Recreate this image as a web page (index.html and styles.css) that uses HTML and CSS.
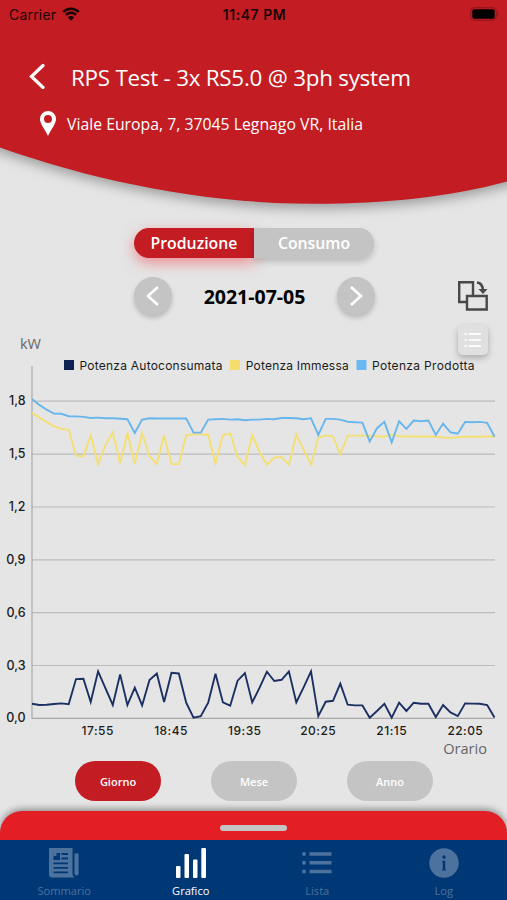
FILE: index.html
```
<!DOCTYPE html>
<html lang="it">
<head>
    <meta charset="UTF-8">
    <meta name="viewport" content="width=device-width, initial-scale=1.0">
    <title>RPS Test - Grafico</title>
    <link rel="stylesheet" href="styles.css">
</head>
<body>
    <header class="header">
        <svg class="header-bg" viewBox="0 0 507 230" width="507" height="230">
            <path d="M-20 -20H527V175.500L507 181.500C450 197 385 203.800 315 203.800C210 203.800 100 183 0 147.500L-20 140Z" fill="#c31c23"/>
        </svg>
        <div class="status-bar">
            <div class="carrier">
                <span>Carrier</span>
                <svg viewBox="0 0 18 14" width="18" height="14">
                    <path d="M1.200 4.800a11.200 11.200 0 0 1 15.600 0M3.900 7.800a7.300 7.300 0 0 1 10.200 0" fill="none" stroke="#1a0305" stroke-width="2.500"/>
                    <path d="M9 13.800L5.800 10.400a4.600 4.600 0 0 1 6.400 0Z" fill="#1a0305"/>
                </svg>
            </div>
            <div class="time">11:47 PM</div>
            <svg class="battery" viewBox="0 0 30 14" width="30" height="14">
                <rect x=".7" y=".7" width="25.600" height="12.600" rx="3.500" fill="none" stroke="#8c1419"/>
                <rect x="2.300" y="2.300" width="22.400" height="9.400" rx="2" fill="#000"/>
                <path d="M27.600 4.800q2 2.200 0 4.400z" fill="#8c1419"/>
            </svg>
        </div>
        <div class="title-row">
            <svg viewBox="0 0 16 26" width="16" height="26">
                <path d="M14 2.500L2.500 13.500L14 24.500" fill="none" stroke="#fff" stroke-width="3.200" stroke-linecap="round"/>
            </svg>
            <h1>RPS Test - 3x RS5.0 @ 3ph system</h1>
        </div>
        <div class="address-row">
            <svg viewBox="0 0 16 25" width="16" height="25">
                <path d="M8 0a8 8 0 0 0-8 8c0 5 5 10.500 8 17c3-6.500 8-12 8-17a8 8 0 0 0-8-8zm0 4a4 4 0 1 1 0 8a4 4 0 0 1 0-8z" fill="#fff" fill-rule="evenodd"/>
            </svg>
            <span>Viale Europa, 7, 37045 Legnago VR, Italia</span>
        </div>
    </header>

    <main class="content">
        <div class="switch">
            <div class="switch-item active">Produzione</div>
            <div class="switch-item">Consumo</div>
        </div>

        <div class="date-row">
            <button class="round">
                <svg viewBox="0 0 14 20" width="14" height="20"><path d="M12 1L2 10L12 19" fill="none" stroke="#fff" stroke-width="2.600"/></svg>
            </button>
            <div class="date">2021-07-05</div>
            <button class="round">
                <svg viewBox="0 0 14 20" width="14" height="20"><path d="M2 1L12 10L2 19" fill="none" stroke="#fff" stroke-width="2.600"/></svg>
            </button>
            <svg class="rotate" viewBox="0 0 30 30" width="30" height="30">
                <path d="M8.500 21H1.200V1.200H15V14M9 15H28.700V28.500H9Z" fill="none" stroke="#484848" stroke-width="2.400"/>
                <path d="M19 1.500q5.500 .5 6 8" fill="none" stroke="#484848" stroke-width="2.600"/>
                <path d="M20.500 8H29.500L25 13Z" fill="#484848"/>
            </svg>
        </div>

        <div class="tools">
            <span class="unit">kW</span>
            <button class="list-btn">
                <svg viewBox="0 0 18 16" width="18" height="16">
                    <path d="M4.500 1.800H17M4.500 8H17M4.500 14.200H17M.500 1.800H2.500M.500 8H2.500M.500 14.200H2.500" stroke="#fff" stroke-width="1.700"/>
                </svg>
            </button>
        </div>

        <svg class="chart" viewBox="0 356 507 384" width="507" height="384">
            <!-- legend -->
            <rect x="64" y="360" width="10" height="10" fill="#0e2153"/>
            <rect x="230" y="360" width="10" height="10" fill="#f5dd6b"/>
            <rect x="356.500" y="360" width="10" height="10" fill="#6ab8f2"/>
            <g class="legend-text">
                <text x="79.500" y="369.700" textLength="143">Potenza Autoconsumata</text>
                <text x="245.700" y="369.700" textLength="103">Potenza Immessa</text>
                <text x="372" y="369.700" textLength="102.500">Potenza Prodotta</text>
            </g>

            <!-- grid -->
            <path class="grid" d="M32 401.200H495M32 454.100H495M32 507H495M32 559.800H495M32 612.700H495M32 665.500H495"/>
            <path class="axis" d="M32 366V718.400H495"/>

            <g class="y-text">
                <text x="25.500" y="405">1,8</text>
                <text x="25.500" y="458">1,5</text>
                <text x="25.500" y="511">1,2</text>
                <text x="25.500" y="563.500">0,9</text>
                <text x="25.500" y="616.500">0,6</text>
                <text x="25.500" y="669.500">0,3</text>
                <text x="25.500" y="722">0,0</text>
            </g>
            <g class="x-text">
                <text x="97.700" y="735.300">17:55</text>
                <text x="171" y="735.300">18:45</text>
                <text x="244.800" y="735.300">19:35</text>
                <text x="318.200" y="735.300">20:25</text>
                <text x="391.700" y="735.300">21:15</text>
                <text x="465.300" y="735.300">22:05</text>
            </g>

            <g class="lines">
                <polyline id="immessa" stroke="#f4df72"/>
                <polyline id="prodotta" stroke="#69b6ec"/>
                <polyline id="autoconsumata" stroke="#1b3061"/>
            </g>
        </svg>
        <div class="x-title">Orario</div>

        <div class="periods">
            <button class="period active">Giorno</button>
            <button class="period">Mese</button>
            <button class="period">Anno</button>
        </div>
    </main>

    <div class="sheet"><div class="handle"></div></div>

    <nav class="tabs">
        <div class="tab">
            <svg viewBox="0 0 30 30" width="30" height="30">
                <path fill="currentColor" fill-rule="evenodd" d="M0 0H23.500V26q0 2.500 2 3.500H3Q0 29.500 0 26.500ZM4.500 5V12H11V5ZM12.500 5V7H19V5ZM12.500 9.500V11.500H19V9.500ZM4.500 14.500V16.300H19V14.500ZM4.500 19V20.800H19V19ZM4.500 23.500V25.300H19V23.500ZM25.500 5.500H29.500V25.500q0 2-2 2t-2-2Z"/>
                <path fill="currentColor" d="M4.500 5H7.500V8H4.500Z"/>
            </svg>
            <span>Sommario</span>
        </div>
        <div class="tab active">
            <svg viewBox="0 0 30 30" width="30" height="30">
                <g fill="currentColor">
                    <rect x="0" y="18" width="4.500" height="12" rx="1"/>
                    <rect x="8.500" y="6" width="4.500" height="24" rx="1"/>
                    <rect x="17" y="11.500" width="4.500" height="18.500" rx="1"/>
                    <rect x="25.300" y="0" width="4.700" height="30" rx="1"/>
                </g>
            </svg>
            <span>Grafico</span>
        </div>
        <div class="tab">
            <svg viewBox="0 0 30 30" width="30" height="30">
                <path d="M7.500 6H29.500M7.500 14.800H29.500M7.500 23.500H29.500" stroke="currentColor" stroke-width="3.600"/>
                <g fill="currentColor">
                    <circle cx="2" cy="6" r="2"/>
                    <circle cx="2" cy="14.800" r="2"/>
                    <circle cx="2" cy="23.500" r="2"/>
                </g>
            </svg>
            <span>Lista</span>
        </div>
        <div class="tab">
            <svg viewBox="0 0 30 30" width="30" height="30">
                <circle cx="15" cy="15" r="14.700" fill="currentColor"/>
                <circle cx="15" cy="9" r="1.700" fill="#003876"/>
                <path d="M13 12.700H16.200V21.500H17.200V22.500H13V21.500H13.800V13.700H13Z" fill="#003876"/>
            </svg>
            <span>Log</span>
        </div>
    </nav>

    <script>
        const series = {
            autoconsumata: [83, 76, 78, 82, 85, 80, 223, 225, 93, 267, 172, 76, 250, 76, 174, 74, 218, 255, 93, 259, 255, 89, 4, 13, 89, 253, 91, 72, 214, 257, 91, 174, 265, 212, 219, 267, 91, 176, 267, 13, 95, 100, 197, 78, 74, 74, 4, 42, 83, 4, 89, 42, 89, 83, 83, 8, 76, 34, 13, 85, 84, 83, 76, 5],
            immessa: [1734, 1707, 1681, 1658, 1643, 1638, 1492, 1486, 1607, 1443, 1550, 1624, 1447, 1620, 1443, 1620, 1488, 1443, 1607, 1443, 1443, 1607, 1612, 1612, 1610, 1447, 1607, 1618, 1484, 1437, 1607, 1512, 1439, 1480, 1484, 1439, 1611, 1526, 1439, 1594, 1605, 1601, 1499, 1605, 1605, 1605, 1603, 1601, 1598, 1612, 1601, 1600, 1600, 1600, 1600, 1598, 1594, 1592, 1596, 1598, 1598, 1598, 1601, 1597],
            prodotta: [1813, 1779, 1752, 1730, 1729, 1715, 1714, 1711, 1705, 1707, 1703, 1703, 1701, 1698, 1620, 1696, 1703, 1702, 1702, 1702, 1702, 1702, 1622, 1622, 1696, 1698, 1700, 1696, 1698, 1692, 1696, 1696, 1700, 1698, 1705, 1705, 1703, 1698, 1703, 1609, 1700, 1700, 1696, 1684, 1681, 1679, 1571, 1647, 1683, 1567, 1686, 1643, 1690, 1686, 1690, 1609, 1673, 1624, 1615, 1683, 1681, 1683, 1677, 1598]
        };

        for (const id in series) {
            const points = series[id].map((w, i) => {
                const x = 32 + i * 462.5 / 63;
                const y = 718.4 - w * 0.1762;
                return x.toFixed(1) + ',' + y.toFixed(1);
            });
            document.getElementById(id).setAttribute('points', points.join(' '));
        }
    </script>
</body>
</html>
```
FILE: styles.css
```
* {
    box-sizing: border-box;
}
body {
    margin: 0;
    width: 507px;
    height: 900px;
    display: flex;
    flex-direction: column;
    overflow: hidden;
    background: #e5e5e5;
    font-family: "Open Sans", "Noto Sans", sans-serif;
}
svg {
    display: block;
    flex-shrink: 0;
}
button {
    border: none;
    padding: 0;
    font-family: inherit;
    display: flex;
    align-items: center;
    justify-content: center;
}
.header {
    position: relative;
    height: 228px;
    flex-shrink: 0;
    color: #fff;
}
.header-bg {
    position: absolute;
    top: 0;
    left: 0;
    z-index: -1;
    overflow: visible;
    filter: drop-shadow(0 5px 6px rgba(0,0,0,0.3));
}
.status-bar {
    height: 28px;
    padding: 0 7px 0 9px;
    display: grid;
    grid-template-columns: 1fr auto 1fr;
    align-items: center;
    font-family: Inter, sans-serif;
    font-size: 14px;
    color: #1a0305;
}
.carrier {
    display: flex;
    align-items: center;
    gap: 6px;
    letter-spacing: 0.2px;
}
.time {
    font-weight: 600;
    letter-spacing: 0.55px;
}
.battery {
    justify-self: end;
}
.title-row {
    display: flex;
    align-items: center;
    gap: 26px;
    height: 34px;
    margin-top: 32px;
    padding-left: 29px;
}
.title-row svg {
    margin-top: -2px;
}
h1 {
    margin: 0;
    font-size: 22.4px;
    font-weight: 400;
    letter-spacing: -0.24px;
    white-space: nowrap;
}
.address-row {
    display: flex;
    align-items: center;
    gap: 11px;
    height: 26px;
    margin-top: 17px;
    padding-left: 40px;
    font-size: 15.8px;
    white-space: nowrap;
}
.address-row svg {
    margin-top: -1px;
}
.content {
    height: 583px;
    flex-shrink: 0;
}
.switch {
    display: flex;
    width: 240px;
    height: 30px;
    margin-left: 134px;
}
.switch-item {
    flex: 1;
    display: flex;
    align-items: center;
    justify-content: center;
    background: #c4c4c4;
    border-radius: 0 15px 15px 0;
    box-shadow: 0 4px 6px rgba(0,0,0,0.18);
    color: #fff;
    font-size: 15.8px;
    font-weight: 600;
}
.switch-item.active {
    background: #c31c23;
    border-radius: 15px 0 0 15px;
    box-shadow: 0 5px 14px rgba(240,60,70,0.5);
}
.date-row {
    display: flex;
    align-items: center;
    height: 38px;
    margin: 19px 19px 0 134px;
}
.round {
    width: 38px;
    height: 38px;
    border-radius: 50%;
    background: #c4c4c4;
    box-shadow: 0 3px 5px rgba(0,0,0,0.2);
}
.date {
    width: 165px;
    text-align: center;
    font-size: 19.5px;
    font-weight: 700;
}
.rotate {
    margin-left: auto;
}
.tools {
    display: flex;
    justify-content: space-between;
    height: 41px;
    padding: 10px 19px 0 20px;
}
.unit {
    padding-top: 9px;
    font-size: 14.5px;
    line-height: 20px;
    color: #666;
}
.list-btn {
    width: 30px;
    height: 30px;
    border-radius: 5px;
    background: #e0e0e0;
    box-shadow: 0 3px 6px rgba(0,0,0,0.25);
}
.chart {
    font-family: Inter, sans-serif;
    font-size: 12px;
    fill: #1c1c1c;
}
.grid {
    fill: none;
    stroke: #bcbcbc;
    stroke-width: 1.2;
}
.axis {
    fill: none;
    stroke: #a9a9a9;
    stroke-width: 1.2;
}
.y-text {
    text-anchor: end;
    font-size: 12.5px;
    font-weight: 500;
}
.x-text {
    text-anchor: middle;
    letter-spacing: 0.45px;
    font-weight: 500;
}
.lines {
    fill: none;
    stroke-width: 1.9;
}
.x-title {
    height: 21px;
    padding-right: 20px;
    line-height: 17px;
    text-align: right;
    font-size: 14.6px;
    color: #666;
}
.periods {
    display: flex;
    gap: 50px;
    padding-left: 75px;
}
.period {
    width: 86px;
    height: 40px;
    border-radius: 20px;
    background: #c4c4c4;
    color: #fff;
    font-size: 11px;
    font-weight: 600;
}
.period.active {
    background: #c31c23;
}
.sheet {
    height: 29px;
    flex-shrink: 0;
    display: flex;
    justify-content: center;
    padding-top: 14px;
    background: #e31e24;
    border-radius: 22px 22px 0 0;
    box-shadow: 0 -2px 7px rgba(0,0,0,0.4);
}
.handle {
    width: 67px;
    height: 6px;
    border-radius: 3px;
    background: #c4c4c4;
}
.tabs {
    position: relative;
    display: grid;
    grid-template-columns: repeat(4, 1fr);
    height: 60px;
    flex-shrink: 0;
    padding-left: 1px;
    background: #003876;
}
.tab {
    display: flex;
    flex-direction: column;
    align-items: center;
    padding-top: 8px;
    color: #4c729d;
    font-size: 11.1px;
}
.tab span {
    margin-top: 5px;
    line-height: 16px;
}
.tab.active {
    color: #fff;
}
```
